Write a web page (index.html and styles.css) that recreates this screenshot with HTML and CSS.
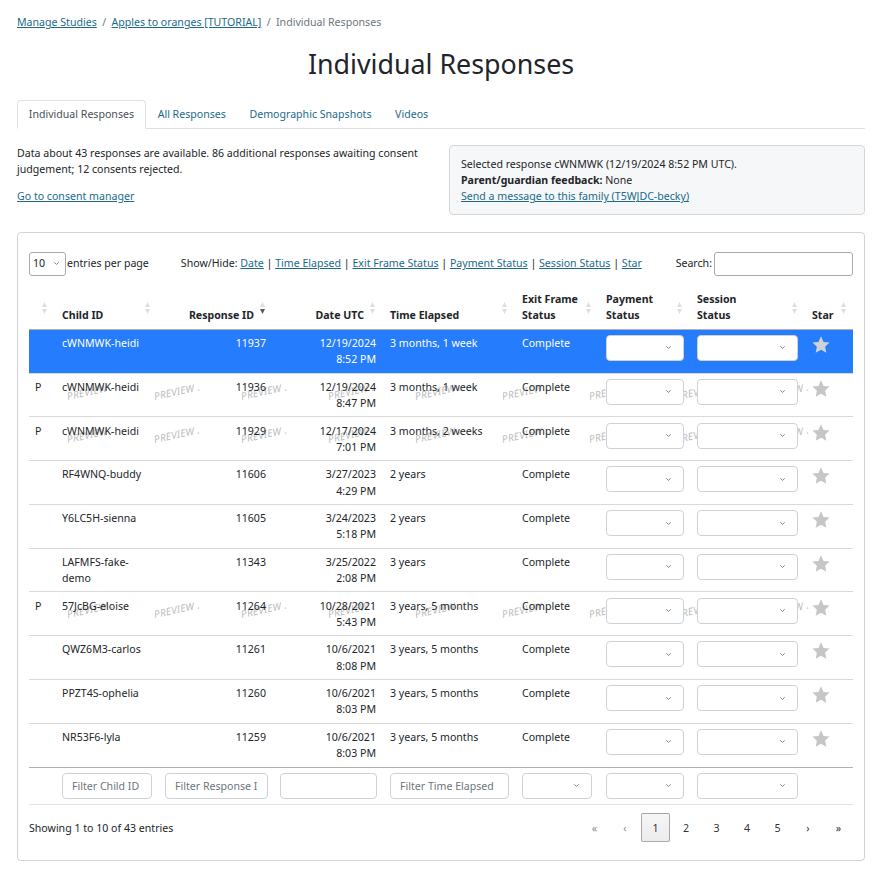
FILE: index.html
```html
<!DOCTYPE html>
<html lang="en">
<head>
<meta charset="utf-8">
<title>Individual Responses</title>
<link rel="stylesheet" href="styles.css">
</head>
<body>
<div class="page">
  <nav class="crumbs">
    <a href="#">Manage Studies</a><span class="sep">/</span><a href="#">Apples to oranges [TUTORIAL]</a><span class="sep">/</span><span class="cur">Individual Responses</span>
  </nav>
  <h1 class="title">Individual Responses</h1>
  <ul class="tabs">
    <li class="tab active">Individual Responses</li>
    <li class="tab"><a href="#">All Responses</a></li>
    <li class="tab"><a href="#">Demographic Snapshots</a></li>
    <li class="tab"><a href="#">Videos</a></li>
  </ul>

  <div class="summary">
    <div class="summary-left">
      <p class="summary-text">Data about 43 responses are available. 86 additional responses awaiting consent judgement; 12 consents rejected.</p>
      <a href="#">Go to consent manager</a>
    </div>
    <div class="infobox">
      <div>Selected response cWNMWK (12/19/2024 8:52 PM UTC).</div>
      <div><strong>Parent/guardian feedback:</strong> None</div>
      <div><a href="#">Send a message to this family (T5WJDC-becky)</a></div>
    </div>
  </div>

  <div class="card">
    <div class="controls">
      <select class="len-select"><option>10</option></select>
      <span class="len-label">entries per page</span>
      <div class="showhide">Show/Hide: <a href="#">Date</a> | <a href="#">Time Elapsed</a> | <a href="#">Exit Frame Status</a> | <a href="#">Payment Status</a> | <a href="#">Session Status</a> | <a href="#">Star</a></div>
      <label class="search">Search:<input class="search-input" type="text"></label>
    </div>

    <table class="grid">
      <colgroup>
        <col class="c1"><col class="c2"><col class="c3"><col class="c4"><col class="c5"><col class="c6"><col class="c7"><col class="c8"><col class="c9">
      </colgroup>
      <thead>
        <tr>
          <th class="first"><svg class="sort" viewBox="0 0 5 12"><path class="up" d="M0 5 2.5 0 5 5z"/><path class="dn" d="M0 7h5l-2.5 5z"/></svg></th>
          <th>Child ID<svg class="sort" viewBox="0 0 5 12"><path class="up" d="M0 5 2.5 0 5 5z"/><path class="dn" d="M0 7h5l-2.5 5z"/></svg></th>
          <th class="num">Response ID<svg class="sort desc" viewBox="0 0 5 12"><path class="up" d="M0 5 2.5 0 5 5z"/><path class="dn" d="M0 7h5l-2.5 5z"/></svg></th>
          <th class="num">Date UTC<svg class="sort" viewBox="0 0 5 12"><path class="up" d="M0 5 2.5 0 5 5z"/><path class="dn" d="M0 7h5l-2.5 5z"/></svg></th>
          <th>Time Elapsed<svg class="sort" viewBox="0 0 5 12"><path class="up" d="M0 5 2.5 0 5 5z"/><path class="dn" d="M0 7h5l-2.5 5z"/></svg></th>
          <th>Exit Frame<br>Status<svg class="sort" viewBox="0 0 5 12"><path class="up" d="M0 5 2.5 0 5 5z"/><path class="dn" d="M0 7h5l-2.5 5z"/></svg></th>
          <th>Payment<br>Status<svg class="sort" viewBox="0 0 5 12"><path class="up" d="M0 5 2.5 0 5 5z"/><path class="dn" d="M0 7h5l-2.5 5z"/></svg></th>
          <th>Session<br>Status<svg class="sort" viewBox="0 0 5 12"><path class="up" d="M0 5 2.5 0 5 5z"/><path class="dn" d="M0 7h5l-2.5 5z"/></svg></th>
          <th>Star<svg class="sort" viewBox="0 0 5 12"><path class="up" d="M0 5 2.5 0 5 5z"/><path class="dn" d="M0 7h5l-2.5 5z"/></svg></th>
        </tr>
      </thead>
      <tbody>
        <tr class="selected">
          <td class="first"></td>
          <td>cWNMWK-heidi</td>
          <td class="num">11937</td>
          <td class="num">12/19/2024<br>8:52 PM</td>
          <td>3 months, 1 week</td>
          <td>Complete</td>
          <td><select class="cell-select w78"><option></option></select></td>
          <td><select class="cell-select w101"><option></option></select></td>
          <td><svg class="star" viewBox="0 0 18 18"><path d="M9 1.2l2.3 5 5.4.6-4 3.7 1.1 5.4L9 13.2l-4.8 2.7 1.1-5.4-4-3.7 5.4-.6z"/></svg></td>
        </tr>
        <tr>
          <td class="first">P<div class="wm"><span><i>PREVIEW .</i></span><span><i>PREVIEW .</i></span><span><i>PREVIEW .</i></span><span><i>PREVIEW .</i></span><span><i>PREVIEW .</i></span><span><i>PREVIEW .</i></span><span><i>PREVIEW .</i></span><span><i>PREVIEW .</i></span><span><i>PREVIEW .</i></span></div></td>
          <td>cWNMWK-heidi</td>
          <td class="num">11936</td>
          <td class="num">12/19/2024<br>8:47 PM</td>
          <td>3 months, 1 week</td>
          <td>Complete</td>
          <td><select class="cell-select w78"><option></option></select></td>
          <td><select class="cell-select w101"><option></option></select></td>
          <td><svg class="star" viewBox="0 0 18 18"><path d="M9 1.2l2.3 5 5.4.6-4 3.7 1.1 5.4L9 13.2l-4.8 2.7 1.1-5.4-4-3.7 5.4-.6z"/></svg></td>
        </tr>
        <tr>
          <td class="first">P<div class="wm"><span><i>PREVIEW .</i></span><span><i>PREVIEW .</i></span><span><i>PREVIEW .</i></span><span><i>PREVIEW .</i></span><span><i>PREVIEW .</i></span><span><i>PREVIEW .</i></span><span><i>PREVIEW .</i></span><span><i>PREVIEW .</i></span><span><i>PREVIEW .</i></span></div></td>
          <td>cWNMWK-heidi</td>
          <td class="num">11929</td>
          <td class="num">12/17/2024<br>7:01 PM</td>
          <td>3 months, 2 weeks</td>
          <td>Complete</td>
          <td><select class="cell-select w78"><option></option></select></td>
          <td><select class="cell-select w101"><option></option></select></td>
          <td><svg class="star" viewBox="0 0 18 18"><path d="M9 1.2l2.3 5 5.4.6-4 3.7 1.1 5.4L9 13.2l-4.8 2.7 1.1-5.4-4-3.7 5.4-.6z"/></svg></td>
        </tr>
        <tr>
          <td class="first"></td>
          <td>RF4WNQ-buddy</td>
          <td class="num">11606</td>
          <td class="num">3/27/2023<br>4:29 PM</td>
          <td>2 years</td>
          <td>Complete</td>
          <td><select class="cell-select w78"><option></option></select></td>
          <td><select class="cell-select w101"><option></option></select></td>
          <td><svg class="star" viewBox="0 0 18 18"><path d="M9 1.2l2.3 5 5.4.6-4 3.7 1.1 5.4L9 13.2l-4.8 2.7 1.1-5.4-4-3.7 5.4-.6z"/></svg></td>
        </tr>
        <tr>
          <td class="first"></td>
          <td>Y6LC5H-sienna</td>
          <td class="num">11605</td>
          <td class="num">3/24/2023<br>5:18 PM</td>
          <td>2 years</td>
          <td>Complete</td>
          <td><select class="cell-select w78"><option></option></select></td>
          <td><select class="cell-select w101"><option></option></select></td>
          <td><svg class="star" viewBox="0 0 18 18"><path d="M9 1.2l2.3 5 5.4.6-4 3.7 1.1 5.4L9 13.2l-4.8 2.7 1.1-5.4-4-3.7 5.4-.6z"/></svg></td>
        </tr>
        <tr>
          <td class="first"></td>
          <td>LAFMFS-fake-<br>demo</td>
          <td class="num">11343</td>
          <td class="num">3/25/2022<br>2:08 PM</td>
          <td>3 years</td>
          <td>Complete</td>
          <td><select class="cell-select w78"><option></option></select></td>
          <td><select class="cell-select w101"><option></option></select></td>
          <td><svg class="star" viewBox="0 0 18 18"><path d="M9 1.2l2.3 5 5.4.6-4 3.7 1.1 5.4L9 13.2l-4.8 2.7 1.1-5.4-4-3.7 5.4-.6z"/></svg></td>
        </tr>
        <tr>
          <td class="first">P<div class="wm"><span><i>PREVIEW .</i></span><span><i>PREVIEW .</i></span><span><i>PREVIEW .</i></span><span><i>PREVIEW .</i></span><span><i>PREVIEW .</i></span><span><i>PREVIEW .</i></span><span><i>PREVIEW .</i></span><span><i>PREVIEW .</i></span><span><i>PREVIEW .</i></span></div></td>
          <td>57JcBG-eloise</td>
          <td class="num">11264</td>
          <td class="num">10/28/2021<br>5:43 PM</td>
          <td>3 years, 5 months</td>
          <td>Complete</td>
          <td><select class="cell-select w78"><option></option></select></td>
          <td><select class="cell-select w101"><option></option></select></td>
          <td><svg class="star" viewBox="0 0 18 18"><path d="M9 1.2l2.3 5 5.4.6-4 3.7 1.1 5.4L9 13.2l-4.8 2.7 1.1-5.4-4-3.7 5.4-.6z"/></svg></td>
        </tr>
        <tr>
          <td class="first"></td>
          <td>QWZ6M3-carlos</td>
          <td class="num">11261</td>
          <td class="num">10/6/2021<br>8:08 PM</td>
          <td>3 years, 5 months</td>
          <td>Complete</td>
          <td><select class="cell-select w78"><option></option></select></td>
          <td><select class="cell-select w101"><option></option></select></td>
          <td><svg class="star" viewBox="0 0 18 18"><path d="M9 1.2l2.3 5 5.4.6-4 3.7 1.1 5.4L9 13.2l-4.8 2.7 1.1-5.4-4-3.7 5.4-.6z"/></svg></td>
        </tr>
        <tr>
          <td class="first"></td>
          <td>PPZT4S-ophelia</td>
          <td class="num">11260</td>
          <td class="num">10/6/2021<br>8:03 PM</td>
          <td>3 years, 5 months</td>
          <td>Complete</td>
          <td><select class="cell-select w78"><option></option></select></td>
          <td><select class="cell-select w101"><option></option></select></td>
          <td><svg class="star" viewBox="0 0 18 18"><path d="M9 1.2l2.3 5 5.4.6-4 3.7 1.1 5.4L9 13.2l-4.8 2.7 1.1-5.4-4-3.7 5.4-.6z"/></svg></td>
        </tr>
        <tr>
          <td class="first"></td>
          <td>NR53F6-lyla</td>
          <td class="num">11259</td>
          <td class="num">10/6/2021<br>8:03 PM</td>
          <td>3 years, 5 months</td>
          <td>Complete</td>
          <td><select class="cell-select w78"><option></option></select></td>
          <td><select class="cell-select w101"><option></option></select></td>
          <td><svg class="star" viewBox="0 0 18 18"><path d="M9 1.2l2.3 5 5.4.6-4 3.7 1.1 5.4L9 13.2l-4.8 2.7 1.1-5.4-4-3.7 5.4-.6z"/></svg></td>
        </tr>
      </tbody>
      <tfoot>
        <tr>
          <td class="first"></td>
          <td><input class="filter w90" type="text" placeholder="Filter Child ID"></td>
          <td><input class="filter w103" type="text" placeholder="Filter Response ID"></td>
          <td><input class="filter w97" type="text"></td>
          <td><input class="filter w119" type="text" placeholder="Filter Time Elapsed"></td>
          <td><select class="cell-select w70"><option></option></select></td>
          <td><select class="cell-select w78"><option></option></select></td>
          <td><select class="cell-select w101"><option></option></select></td>
          <td></td>
        </tr>
      </tfoot>
    </table>

    <div class="foot">
      <div class="info">Showing 1 to 10 of 43 entries</div>
      <div class="paging">
        <span class="pbtn disabled">«</span>
        <span class="pbtn disabled">‹</span>
        <span class="pbtn current">1</span>
        <span class="pbtn">2</span>
        <span class="pbtn">3</span>
        <span class="pbtn">4</span>
        <span class="pbtn">5</span>
        <span class="pbtn">›</span>
        <span class="pbtn">»</span>
      </div>
    </div>
  </div>
</div>
</body>
</html>
```

FILE: styles.css
```css
* { box-sizing: border-box; }

html {
  background: #fff;
}

body {
  margin: 0;
  font-family: "Noto Sans", "Open Sans", sans-serif;
  font-size: 10.6px;
  line-height: 16.2px;
  color: #212529;
}

a {
  color: #1b6a8a;
  text-decoration: underline;
}

.page {
  padding: 14px 15px 0 17px;
}

/* breadcrumb */
.crumbs {
  display: flex;
  align-items: center;
}
.sep {
  color: #6c757d;
  padding: 0 5.4px;
}
.cur { color: #6c757d; }

/* title */
.title {
  margin: 17.6px 0 0;
  font-size: 26.8px;
  line-height: 32.4px;
  font-weight: 400;
  text-align: center;
}

/* tabs */
.tabs {
  display: flex;
  list-style: none;
  margin: 19.6px 0 0;
  padding: 0;
  border-bottom: 1px solid #dee2e6;
}
.tab {
  padding: 5.4px 10.8px;
  border: 1px solid transparent;
  border-radius: 4px 4px 0 0;
  margin-bottom: -1px;
}
.tab.active {
  border-color: #dee2e6 #dee2e6 #fff;
  background: #fff;
  color: #495057;
}
.tab a { text-decoration: none; }

/* summary */
.summary {
  display: grid;
  grid-template-columns: 1fr 1fr;
  column-gap: 16px;
  margin-top: 16.2px;
  align-items: start;
}
.summary-text { margin: 0 0 10.8px; }
.infobox {
  border: 1px solid #d3d6d9;
  border-radius: 4px;
  background: #f6f7f8;
  padding: 10px 11px 9px;
}

/* card */
.card {
  margin-top: 17px;
  border: 1px solid rgba(0, 0, 0, 0.175);
  border-radius: 4px;
  padding: 11px 11px 18px;
}

.controls {
  display: flex;
  align-items: center;
  height: 24px;
  margin-top: 8px;
}
.len-select {
  appearance: none;
  -webkit-appearance: none;
  width: 37px;
  height: 24px;
  border: 1px solid #aaa;
  border-radius: 3px;
  padding: 0 0 0 3px;
  font: inherit;
  color: #212529;
  background: #fff url("data:image/svg+xml,%3csvg xmlns='http://www.w3.org/2000/svg' viewBox='0 0 16 16'%3e%3cpath fill='none' stroke='%23343a40' stroke-linecap='round' stroke-linejoin='round' stroke-width='2' d='m2 5 6 6 6-6'/%3e%3c/svg%3e") no-repeat right 5px center / 7px 5px;
}
.len-label { margin-left: 1px; }
.showhide { margin-left: 32px; }
.search {
  margin-left: auto;
  display: flex;
  align-items: center;
}
.search-input {
  width: 139px;
  height: 24px;
  margin-left: 2px;
  border: 1px solid #aaa;
  border-radius: 3px;
  font: inherit;
}

/* table */
.grid {
  width: 100%;
  margin-top: 10px;
  table-layout: fixed;
  border-collapse: separate;
  border-spacing: 0;
}
.c1 { width: 25px; }
.c2 { width: 103px; }
.c3 { width: 115px; }
.c4 { width: 110px; }
.c5 { width: 132px; }
.c6 { width: 84px; }
.c7 { width: 91px; }
.c8 { width: 115px; }
.c9 { width: 49px; }

.grid th {
  position: relative;
  padding: 5.4px 18px 5.4px 8px;
  vertical-align: bottom;
  text-align: left;
  font-weight: 700;
  border-bottom: 1px solid rgba(0, 0, 0, 0.3);
}
.grid th.num { text-align: right; }

.sort {
  position: absolute;
  right: 7.5px;
  bottom: 15px;
  width: 5px;
  height: 12px;
}
.sort path { fill: #000; opacity: 0.13; }
.sort.desc .dn { opacity: 0.65; }

.grid td {
  padding: 5.2px 8px;
  vertical-align: top;
  border-top: 1px solid rgba(0, 0, 0, 0.15);
}
.grid tbody tr:first-child td { border-top: 0; }
.grid td.first,
.grid th.first { padding-left: 6px; }
.grid td.first { position: relative; }
.grid td.num {
  text-align: right;
  padding-right: 6px;
}

.grid tr.selected td {
  background: #257cfd;
  color: #fff;
}

.cell-select {
  display: block;
  appearance: none;
  -webkit-appearance: none;
  height: 26px;
  border: 1px solid #cdd2d7;
  border-radius: 4px;
  font: inherit;
  background: #fff url("data:image/svg+xml,%3csvg xmlns='http://www.w3.org/2000/svg' viewBox='0 0 16 16'%3e%3cpath fill='none' stroke='%23343a40' stroke-linecap='round' stroke-linejoin='round' stroke-width='2' d='m2 5 6 6 6-6'/%3e%3c/svg%3e") no-repeat right 11px center / 7px 5px;
}
.w70 { width: 70px; }
.w78 { width: 78px; }
.w90 { width: 90px; }
.w97 { width: 97px; }
.w101 { width: 101px; }
.w103 { width: 103px; }
.w119 { width: 119px; }

.star {
  display: block;
  width: 20px;
  height: 20px;
  margin: 0 0 0 -1px;
  fill: #c6c6c6;
}
.selected .star { fill: #cfd3d8; }

/* preview watermark */
.wm {
  position: absolute;
  z-index: -1;
  left: 38px;
  top: 0;
  width: 786px;
  height: 43px;
  overflow: hidden;
  display: flex;
  align-items: flex-start;
  padding-top: 14px;
  pointer-events: none;
}
.wm span {
  flex: none;
  width: 87px;
}
.wm i {
  display: inline-block;
  font-size: 10px;
  line-height: 12px;
  font-style: italic;
  letter-spacing: 0.3px;
  color: #bcbcbc;
  transform: rotate(-12deg);
  transform-origin: 0 50%;
  white-space: nowrap;
}

/* footer filters */
.grid tfoot td {
  padding-top: 5.4px;
  padding-bottom: 5.4px;
  border-top: 1px solid rgba(0, 0, 0, 0.3);
  border-bottom: 1px solid rgba(0, 0, 0, 0.12);
}
.filter {
  display: block;
  height: 26px;
  border: 1px solid #cdd2d7;
  border-radius: 4px;
  padding: 0 9px;
  font: inherit;
  color: #212529;
}
.filter::placeholder { color: #6c757d; }

/* bottom bar */
.foot {
  display: flex;
  align-items: center;
  justify-content: space-between;
  margin-top: 8px;
}
.paging { display: flex; }
.pbtn {
  display: inline-flex;
  align-items: center;
  justify-content: center;
  width: 29px;
  height: 29px;
  margin-left: 1.5px;
  border: 1px solid transparent;
  border-radius: 2px;
  color: #333;
}
.pbtn.disabled { color: #8c8c8c; }
.pbtn.current {
  border-color: rgba(0, 0, 0, 0.3);
  background: linear-gradient(to bottom, #f6f6f6 0%, #ececec 100%);
}
```
